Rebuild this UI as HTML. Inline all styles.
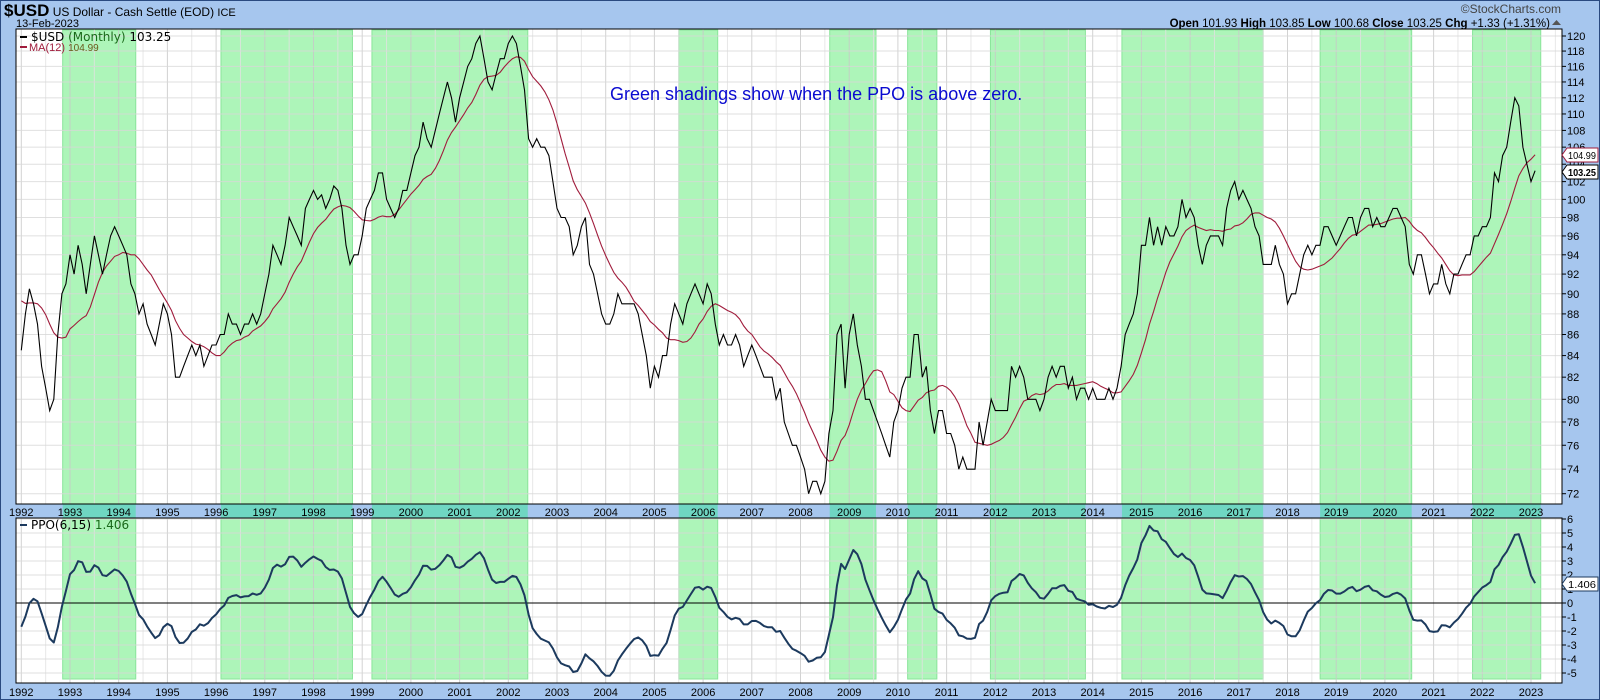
<!DOCTYPE html>
<html><head><meta charset="utf-8">
<style>
html,body{margin:0;padding:0;background:#a6c6ee;width:1600px;height:700px;overflow:hidden;font-family:"Liberation Sans",sans-serif}
svg{display:block}
</style></head><body>
<svg id="s" width="1600" height="700" xmlns="http://www.w3.org/2000/svg" font-family="Liberation Sans, sans-serif">
<rect x="0" y="0" width="1600" height="700" fill="#a6c6ee"/>
<rect x="0.5" y="0.5" width="1599" height="699" fill="none" stroke="#2a4a80"/>
<text x="4" y="16" font-size="12" fill="#000"><tspan font-size="17" font-weight="bold">$USD</tspan> US Dollar - Cash Settle (EOD) <tspan font-size="11">ICE</tspan></text>
<text x="16" y="27" font-size="11" fill="#000">13-Feb-2023</text>
<text x="1561" y="13" font-size="12" fill="#444" text-anchor="end">©StockCharts.com</text>
<text x="1550" y="27" font-size="11.5" fill="#000" text-anchor="end"><tspan font-weight="bold">Open</tspan> 101.93 <tspan font-weight="bold">High</tspan> 103.85 <tspan font-weight="bold">Low</tspan> 100.68 <tspan font-weight="bold">Close</tspan> 103.25 <tspan font-weight="bold">Chg</tspan> +1.33 (+1.31%)</text>
<path d="M1552 25 L1561 25 L1556.5 20 Z" fill="#555"/>
<g id="g"></g>
</svg>
<script>
(function(){
var NS="http://www.w3.org/2000/svg",g=document.getElementById("g");
function el(t,a,txt){var e=document.createElementNS(NS,t);for(var k in a)e.setAttribute(k,a[k]);if(txt!==undefined)e.textContent=txt;g.appendChild(e);return e;}
var L=16,R=1562,T1=29,B1=504,T2=518,B2=683;
function X(t){return 21.3+(t-1992)*48.7;}
function Y1(v){return 36+896*Math.log(120/v);}
function Y2(v){return 603-14*v;}
el("rect",{x:L,y:T1,width:R-L,height:B1-T1,fill:"#fff"});
el("rect",{x:L,y:T2,width:R-L,height:B2-T2,fill:"#fff"});
el("rect",{x:L,y:B1,width:R-L,height:T2-B1,fill:"#a6c6ee"});
var sh=[[1992.85,1994.35],[1996.1,1998.8],[1999.2,2002.4],[2005.5,2006.3],[2008.6,2009.55],[2010.2,2010.8],[2011.9,2013.85],[2014.6,2017.5],[2018.67,2020.55],[2021.8,2023.2]];
sh.forEach(function(s){var a=X(s[0]),b=X(s[1]);
 el("rect",{x:a,y:T1+1,width:b-a,height:B1-T1-1,fill:"#adf5b9",stroke:"#8ae49a","stroke-width":1});
 el("rect",{x:a,y:B1,width:b-a,height:T2-B1,fill:"#6fd6c2"});
 el("rect",{x:a,y:T2,width:b-a,height:B2-T2-4,fill:"#adf5b9",stroke:"#8ae49a","stroke-width":1});
});
for(var t=1992;t<=2023.6;t+=0.5){var x=X(t);if(x<L||x>R)continue;var c=(t%1==0)?"#c8c8c8":"#e2e2e2";
 el("line",{x1:x,y1:T1,x2:x,y2:B1,stroke:c,"stroke-width":1,"opacity":0.8});
 el("line",{x1:x,y1:T2,x2:x,y2:B2,stroke:c,"stroke-width":1,"opacity":0.8});}
for(var v=72;v<=120;v+=2){var y=Y1(v);el("line",{x1:L,y1:y,x2:R,y2:y,stroke:"#d8d8d8","stroke-width":1,opacity:0.8});
 el("line",{x1:R,y1:y,x2:R+4,y2:y,stroke:"#000"});
 el("text",{x:R+5,y:y+4,"font-size":11,fill:"#000"},String(v));}
for(var v=-5;v<=6;v++){var y=Y2(v);if(v!=0)el("line",{x1:L,y1:y,x2:R,y2:y,stroke:"#d8d8d8","stroke-width":1,opacity:0.8});
 el("line",{x1:R,y1:y,x2:R+4,y2:y,stroke:"#000"});
 el("text",{x:R+5,y:y+4,"font-size":11,fill:"#000"},String(v));}
el("line",{x1:L,y1:Y2(0),x2:R,y2:Y2(0),stroke:"#000","stroke-width":1});
for(var yr=1992;yr<=2023;yr++){var x=X(yr);
 el("text",{x:x,y:516,"font-size":11,fill:"#000","text-anchor":"middle"},String(yr));
 el("text",{x:x,y:696,"font-size":11,fill:"#000","text-anchor":"middle"},String(yr));}
var d=[84.5,88,90.5,89,87,83,81,79,80,86,90,91,
94,92,95,93,90,93,96,94,92,94,96,97,
96,95,94,91,90,88,89,87,86,85,87,89,
88,86,82,82,83,84,85,84,85,83,84,85,
85,86,86,88,87,87,86,87,87,88,87,88,
90,92,95,94,93,95,98,97,96,95,99,100,
101,100,100.5,99,100,101.5,101,99,95,93,94,94,
96,99,100,101,103,103,100,99,98,99,101,101,
103,105,106,109,107,106,108,110,112,114,112,109,
112,114,116,117,119,120,117,114,113,115,117,117,
119,120,119,116,113,107,106,107,106,106,105,102,
99,98,98,97,94,95,97,98,93,92,90,88,
87,87,88,90,89,89,89,89,88,86,84,81,
83,82,84,84,87,89,88,87,89,90,91,90,
89,91,90,87,85,86,85,85,86,85,83,84,
85,84,83,82,82,82,80,81,78,77,76,76,
75,74,72,73,73,72,73,77,79,86,87,81,
86,88,85,83,80,80,79,78,77,76,75,78,
79,81,82,82,86,86,82,83,79,77,79,79,
77,77,76,74,75,74,74,74,78,76,78,80,
79,79,79,79,83,82,83,82,80,80,80,79,
80,82,83,82,83,83,81,82,80,81,81,80,
81,80,80,80,81,80,81,83,86,87,88,90,
95,95,98,95,97,95,97,96,96,97,100,98,
99,98,95,93,95,96,96,96,95,99,101,102,
100,101,100,99,97,96,93,93,93,95,93,92,
89,90,90,92,94,95,94,95,95,97,97,96,
95,96,97,98,98,96,98,99,99,97,98,97,
97,98,99,99,98,97,93,92,94,94,92,90,
91,91,93,91,90,92,92,93,94,94,96,96,
97,97,98,103,102,105,106,109,112,111,106,104,
102,103.25];
function tx(i){return X(1992+i/12);}
var p="";d.forEach(function(v,i){p+=(i?"L":"M")+tx(i).toFixed(1)+" "+Y1(v).toFixed(1);});
var m="";var pre=[91,90,89,88,88,89,90,90,91,91,90];
var full=pre.concat(d);
for(var i=0;i<d.length;i++){var s=0;for(var j=i;j<=i+11;j++){s+=full[j];}var v=s/12;m+=(i?"L":"M")+tx(i).toFixed(1)+" "+Y1(v).toFixed(1);}
el("path",{d:m,fill:"none",stroke:"#a01c3c","stroke-width":1.1});
el("path",{d:p,fill:"none",stroke:"#000","stroke-width":1.1});
var e6=85.5,e15=87,a6=2/7,a15=2/16,q="";
d.forEach(function(v,i){e6=e6+a6*(v-e6);e15=e15+a15*(v-e15);var pp=(e6-e15)/e15*100;q+=(i?"L":"M")+tx(i).toFixed(1)+" "+Y2(pp).toFixed(1);});
el("path",{d:q,fill:"none",stroke:"#1c3a5e","stroke-width":2,"stroke-linejoin":"round"});
el("rect",{x:L,y:T1,width:R-L,height:B1-T1,fill:"none",stroke:"#000","stroke-width":1});
el("rect",{x:L,y:T2,width:R-L,height:B2-T2,fill:"none",stroke:"#000","stroke-width":1});
el("line",{x1:20,y1:37,x2:27,y2:37,stroke:"#000","stroke-width":2});
var t1=el("text",{x:31,y:41,"font-size":12,"font-family":"DejaVu Sans, sans-serif",fill:"#000"});
t1.innerHTML='$USD <tspan fill="#1a6a1a">(Monthly)</tspan> 103.25';
el("line",{x1:20,y1:47,x2:27,y2:47,stroke:"#a01c3c","stroke-width":2});
var t2=el("text",{x:29,y:51,"font-size":11,fill:"#a01c3c"});
t2.innerHTML='MA(12) <tspan fill="#6a5a1a" font-size="10">104.99</tspan>';
el("line",{x1:20,y1:525,x2:27,y2:525,stroke:"#1c3a5e","stroke-width":2});
var t3=el("text",{x:31,y:529,"font-size":12,"font-family":"DejaVu Sans, sans-serif",fill:"#000"});
t3.innerHTML='PPO(6,15) <tspan fill="#1a6a1a">1.406</tspan>';
el("text",{x:610,y:100,"font-size":18,fill:"#0a0ad0"},"Green shadings show when the PPO is above zero.");
function tag(y,txt,col,bold){el("path",{d:"M1562 "+y+" L1567 "+(y-7)+" L1598 "+(y-7)+" L1598 "+(y+7)+" L1567 "+(y+7)+" Z",fill:"#fff",stroke:col});
 el("text",{x:1568,y:y+4,"font-size":10.5,fill:"#000","font-weight":bold?"bold":"normal",textLength:28,lengthAdjust:"spacingAndGlyphs"},txt);}
tag(155,"104.99","#a01c3c",false);tag(172,"103.25","#000",true);tag(584,"1.406","#1c3a5e",false);
})();
</script>
</body></html>
